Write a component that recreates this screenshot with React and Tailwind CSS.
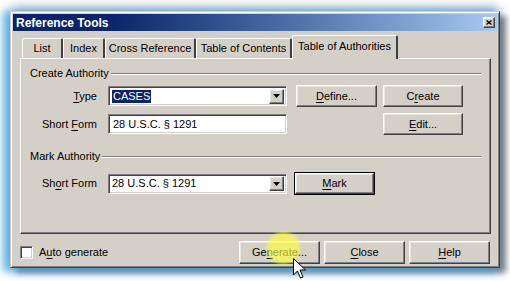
import React from 'react';

const raised = 'border border-t-white border-l-white border-r-[#404040] border-b-[#404040] shadow-[inset_-1px_-1px_#808080,inset_1px_1px_#e8e6e0]';
const sunken = 'border border-t-[#808080] border-l-[#808080] border-r-white border-b-white shadow-[inset_1px_1px_#404040,inset_-1px_-1px_#d4d0c8]';

function U({ children }) {
  return <span className="underline underline-offset-[2px]">{children}</span>;
}

function Button({ children, className = '' }) {
  return (
    <div className={`shrink-0 flex items-center justify-center bg-[#d4d0c8] whitespace-nowrap ${raised} ${className}`}>
      <span>{children}</span>
    </div>
  );
}

function Arrow() {
  return (
    <svg width="7" height="4" viewBox="0 0 7 4">
      <path d="M0 0h7L3.5 4z" fill="#000" />
    </svg>
  );
}

function Combo({ children }) {
  return (
    <div className={`w-[179px] h-[20px] bg-white flex items-center pl-[3px] pr-[2px] ${sunken}`}>
      <div className="flex-1 flex items-center whitespace-nowrap">{children}</div>
      <div className={`w-[15px] h-[15px] bg-[#d4d0c8] flex items-center justify-center ${raised}`}>
        <Arrow />
      </div>
    </div>
  );
}

function GroupLabel({ children }) {
  return (
    <div className="flex items-center h-[13px] pr-[9px]">
      <span className="pr-[2px] whitespace-nowrap">{children}</span>
      <div className="flex-1 border-t border-t-[#808080] border-b border-b-white" />
    </div>
  );
}

const tabs = [
  { label: 'List', w: 'w-[41px]' },
  { label: 'Index', w: 'w-[42px]' },
  { label: 'Cross Reference', w: 'w-[91px]' },
  { label: 'Table of Contents', w: 'w-[96px]' },
];

export default function App() {
  return (
    <div
      className="w-[510px] h-[281px] bg-white overflow-hidden relative pt-[11px] pl-[10px] text-[11px] text-black leading-[13px]"
      style={{ fontFamily: '"Liberation Sans", Arial, sans-serif' }}
    >
      <div className="w-[490px] h-[257px] bg-[#d4d0c8] border border-t-[#d4d0c8] border-l-[#d4d0c8] border-r-[#404040] border-b-[#404040] shadow-[inset_1px_1px_#fff,inset_-1px_-1px_#808080,-5px_2px_8px_2px_rgba(60,160,225,0.8),0_-6px_10px_-2px_rgba(70,90,120,0.45),6px_5px_6px_rgba(40,40,50,0.6)] p-[2px] flex flex-col">
        {/* title bar */}
        <div className="h-[17px] bg-gradient-to-r from-[#0a246a] from-20% to-[#a6caf0] flex items-center justify-between pl-[3px] pr-[2px]">
          <span className="text-white font-bold text-[12px] leading-[14px]">Reference Tools</span>
          <div className={`w-[12px] h-[11px] bg-[#d4d0c8] flex items-center justify-center ${raised}`}>
            <svg width="6" height="5" viewBox="0 0 6 5">
              <path d="M0.5 0.5L5.5 4.5M5.5 0.5L0.5 4.5" stroke="#000" strokeWidth="1.3" />
            </svg>
          </div>
        </div>

        <div className="flex-1 flex flex-col pl-[7px] pr-[6px] pt-[4px]">
          {/* tabs */}
          <div className="flex items-end h-[23px] pl-[2px]">
            {tabs.map((t) => (
              <div
                key={t.label}
                className={`${t.w} h-[20px] flex items-center justify-center whitespace-nowrap border-t border-l border-t-white border-l-white border-r-2 border-r-[#404040] rounded-t-[2px]`}
              >
                {t.label}
              </div>
            ))}
            <div className="w-[106px] h-[24px] -mb-px relative z-10 bg-[#d4d0c8] flex items-start pt-[4px] justify-center whitespace-nowrap border-t border-l border-t-white border-l-white border-r-2 border-r-[#404040] rounded-t-[2px]">
              Table of Authorities
            </div>
          </div>

          {/* panel */}
          <div className="h-[176px] border border-t-white border-l-white border-r-[#404040] border-b-[#404040] shadow-[inset_-1px_-1px_#808080] pl-[9px] pt-[8px]">
            <GroupLabel>Create Authority</GroupLabel>

            <div className="flex items-center h-[22px] mt-[5px]">
              <div className="w-[67px] text-right whitespace-nowrap"><U>T</U>ype</div>
              <div className="ml-[11px]">
                <Combo>
                  <span className="bg-[#0a246a] text-white px-[1px]">CASES</span>
                </Combo>
              </div>
              <Button className="ml-[9px] w-[81px] h-[22px]"><U>D</U>efine...</Button>
              <Button className="ml-[6px] w-[80px] h-[22px]">C<U>r</U>eate</Button>
            </div>

            <div className="flex items-center h-[22px] mt-[6px]">
              <div className="w-[67px] text-right whitespace-nowrap">Short <U>F</U>orm</div>
              <div className={`ml-[11px] w-[179px] h-[20px] bg-white flex items-center pl-[4px] whitespace-nowrap ${sunken}`}>
                28 U.S.C. § 1291
              </div>
              <Button className="ml-[96px] w-[80px] h-[22px]"><U>E</U>dit...</Button>
            </div>

            <div className="mt-[15px]">
              <GroupLabel>Mark Authority</GroupLabel>
            </div>

            <div className="flex items-center h-[23px] mt-[9px]">
              <div className="w-[67px] text-right whitespace-nowrap">Sh<U>o</U>rt Form</div>
              <div className="ml-[11px]">
                <Combo>
                  <span>28 U.S.C. § 1291</span>
                </Combo>
              </div>
              <div className="ml-[7px] w-[81px] h-[23px] border border-black">
                <Button className="w-full h-full"><U>M</U>ark</Button>
              </div>
            </div>
          </div>

          {/* bottom row */}
          <div className="flex items-center h-[23px] mt-[7px]">
            <div className={`shrink-0 w-[13px] h-[13px] bg-white ${sunken}`} />
            <span className="ml-[6px] whitespace-nowrap">A<U>u</U>to generate</span>
            <div className="ml-auto flex gap-[4px] pr-[1px]">
              <Button className="w-[81px] h-[23px]">Ge<U>n</U>erate...</Button>
              <Button className="w-[81px] h-[23px]"><U>C</U>lose</Button>
              <Button className="w-[81px] h-[23px]"><U>H</U>elp</Button>
            </div>
          </div>
        </div>
      </div>

      {/* click highlight */}
      <div className="absolute left-[267px] top-[232px] w-[33px] h-[32px] rounded-full bg-[rgba(255,255,60,0.65)] blur-[1.5px]" />

      {/* cursor */}
      <svg className="absolute left-[293px] top-[258px]" width="13" height="21" viewBox="0 0 13 21">
        <path d="M0.5 0.5V17L4.5 13L7.5 20L10 19L7 12H12.5Z" fill="#fff" stroke="#000" strokeWidth="1" strokeLinejoin="miter" />
      </svg>
    </div>
  );
}
